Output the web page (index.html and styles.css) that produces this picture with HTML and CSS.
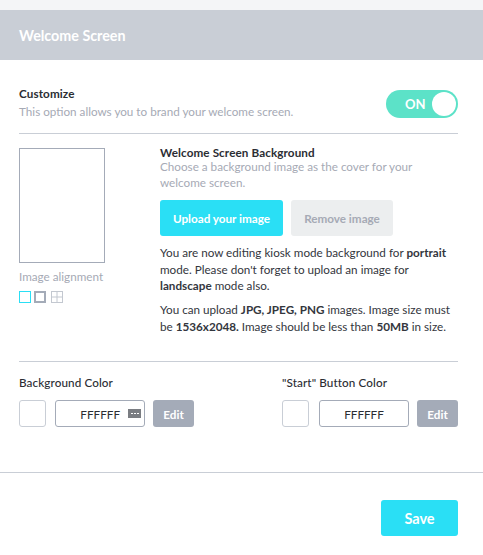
FILE: index.html
```html
<!DOCTYPE html>
<html>
<head>
<meta charset="utf-8">
<link rel="stylesheet" href="styles.css">
</head>
<body>
<div class="topstrip"></div>
<div class="header">Welcome Screen</div>
<div class="content">
  <div class="customize">
    <div>
      <div class="title">Customize</div>
      <div class="sub">This option allows you to brand your welcome screen.</div>
    </div>
    <div class="toggle"><span class="on">ON</span><span class="knob"></span></div>
  </div>
  <div class="divider"></div>
  <div class="bgsection">
    <div class="left">
      <div class="preview"></div>
      <div class="align-label">Image alignment</div>
      <div class="align-icons">
        <span class="ai ai-1"></span>
        <span class="ai ai-2"></span>
        <span class="ai ai-3"><svg width="12" height="12" viewBox="0 0 12 12"><rect x="0.5" y="0.5" width="11" height="11" fill="none" stroke="#c3c8d0"/><line x1="6" y1="0" x2="6" y2="12" stroke="#c3c8d0"/><line x1="0" y1="6" x2="12" y2="6" stroke="#c3c8d0"/></svg></span>
      </div>
    </div>
    <div class="right">
      <div class="title rtitle">Welcome Screen Background</div>
      <div class="sub desc">Choose a background image as the cover for your welcome screen.</div>
      <div class="buttons">
        <button class="btn-upload">Upload your image</button>
        <button class="btn-remove">Remove image</button>
      </div>
      <div class="info">
        <div class="ln">You are now editing kiosk mode background for <b>portrait</b></div>
        <div class="ln">mode. Please don't forget to upload an image for</div>
        <div class="ln"><b>landscape</b> mode also.</div>
      </div>
      <div class="info">
        <div class="ln">You can upload <b>JPG, JPEG, PNG</b> images. Image size must</div>
        <div class="ln">be <b>1536x2048.</b> Image should be less than <b>50MB</b> in size.</div>
      </div>
    </div>
  </div>
  <div class="divider"></div>
  <div class="colors">
    <div class="colorgroup">
      <div class="title">Background Color</div>
      <div class="colorrow">
        <span class="swatch"></span>
        <span class="hexinput">FFFFFF<span class="picker"><i></i><i></i><i></i></span></span>
        <button class="edit">Edit</button>
      </div>
    </div>
    <div class="colorgroup">
      <div class="title">"Start" Button Color</div>
      <div class="colorrow">
        <span class="swatch"></span>
        <span class="hexinput center">FFFFFF</span>
        <button class="edit">Edit</button>
      </div>
    </div>
  </div>
</div>
<div class="fulldivider"></div>
<div class="footer"><button class="save">Save</button></div>
</body>
</html>
```
FILE: styles.css
```css
* { box-sizing: border-box; }
body {
  margin: 0;
  font-family: Lato, "Open Sans", Arial, sans-serif;
  background: #fff;
  color: #2b2d33;
  font-size: 11.7px;
}
.topstrip { height: 10px; background: #f4f5f7; }
.header {
  height: 50px;
  background: #c9ced6;
  color: #fff;
  font-weight: 700;
  font-size: 14.3px;
  padding-left: 19px;
  display: flex;
  align-items: center;
}
.content { padding: 0 25px 0 19px; }
.customize {
  display: flex;
  justify-content: space-between;
  align-items: center;
  padding-top: 26px;
  height: 73px;
}
.customize > div:first-child { margin-top: -15px; }
.title { font-weight: 700; color: #2b2d33; line-height: 14px; letter-spacing: 0.1px; }
.sub { color: #a6aab5; line-height: 16px; margin-top: 3px; }
.toggle {
  width: 72px; height: 28px;
  background: #5ce2c8;
  border-radius: 14px;
  display: flex; align-items: center; justify-content: space-between;
  padding: 0 2px 0 19px;
  margin-top: -11px;
}
.on { color: #fff; font-weight: 700; font-size: 13px; }
.knob { width: 24px; height: 24px; border-radius: 50%; background: #fff; }
.divider { height: 1px; background: #c9ced6; }
.bgsection { display: flex; padding-top: 14px; height: 227px; }
.left { width: 141px; }
.preview { width: 86px; height: 115px; border: 1px solid #a4abb8; }
.align-label { color: #a6aab5; margin-top: 6px; line-height: 14px; }
.align-icons { display: flex; gap: 3px; margin-top: 8px; }
.ai { width: 12px; height: 12px; display: block; }
.ai-1 { border: 1px solid #2adff5; }
.ai-2 { border: 2px solid #a4abb8; }
.ai-3 { margin-left: 2px; }
.ai-3 svg { display: block; }
.right { flex: 1; padding-top: 0; margin-top: -2px; }
.rtitle { line-height: 13px; }
.desc { margin-top: 0; line-height: 15.5px; width: 285px; }
.buttons { display: flex; gap: 8px; margin-top: 10px; }
button { font-family: inherit; border: none; border-radius: 3px; font-weight: 700; cursor: pointer; }
.btn-upload { background: #2adff5; color: #fff; width: 123px; height: 36px; font-size: 11.7px; padding: 0; }
.btn-remove { background: #eceeef; color: #a6aab5; width: 102px; height: 36px; font-size: 11.7px; padding: 0; }
.info { margin-top: 8px; line-height: 16.5px; color: #33363d; }
.info + .info { margin-top: 7.5px; }
.ln { white-space: nowrap; }
.info b { font-weight: 700; }
.colors { display: flex; justify-content: space-between; padding-top: 14px; height: 110px; }
.colorgroup .title { font-weight: 500; margin-bottom: 11px; margin-top: -1px; }
.colorrow { display: flex; align-items: center; }
.swatch { width: 27px; height: 27px; border: 1px solid #c9ced6; border-radius: 3px; display: block; }
.hexinput {
  width: 90px; height: 27px;
  border: 1px solid #a4abb8; border-radius: 3px;
  margin-left: 9px;
  display: flex; align-items: center; justify-content: flex-end;
  padding-right: 3px;
  color: #2b2d33;
}
.hexinput.center { justify-content: center; padding-right: 0; margin-left: 10px; }
.picker {
  width: 13px; height: 9px; background: #7a7d82; margin-left: 8px;
  display: flex; align-items: center; justify-content: center; gap: 1px;
}
.picker i { width: 2px; height: 1px; background: #fff; display: block; }
.edit { width: 41px; height: 27px; background: #a4abb8; color: #fff; font-size: 11.7px; margin-left: 8px; padding: 0; }
.fulldivider { height: 1px; background: #c9ced6; }
.footer { display: flex; justify-content: flex-end; padding: 27px 25px 0 0; }
.save { background: #2adff5; color: #fff; width: 77px; height: 36px; font-size: 14.5px; padding: 0; }
```
